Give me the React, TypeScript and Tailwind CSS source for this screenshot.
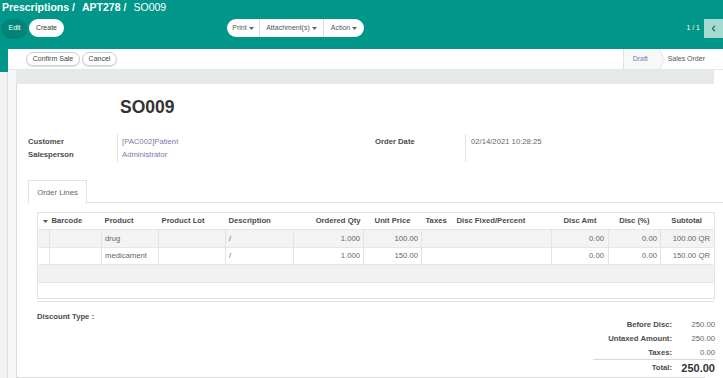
import React from "react";
import { ChevronLeft } from "lucide-react";

const Caret = ({ c = "#4c4c4c" }: { c?: string }) => (
  <svg width="5" height="3" viewBox="0 0 5 3" className="inline-block ml-[2px] align-middle">
    <path d="M0 0h5L2.5 3z" fill={c} />
  </svg>
);

const rows = [
  { product: "drug", qty: "1.000", price: "100.00", amt: "0.00", pct: "0.00", sub: "100.00 QR" },
  { product: "medicament", qty: "1.000", price: "150.00", amt: "0.00", pct: "0.00", sub: "150.00 QR" },
];

export default function App() {
  return (
    <div className="w-[723px] h-[378px] overflow-hidden bg-[#f2f2f2] font-['Liberation_Sans',Arial,sans-serif] text-[#4c4c4c]">
      {/* Control panel */}
      <header className="bg-[#00978a] h-[49px] pl-[2px]">
        <div className="h-[14px] leading-[14px] text-[10.5px] text-white flex items-center whitespace-nowrap">
          <span className="font-bold">Prescriptions</span>
          <span className="font-bold ml-[3px] mr-[7px]">/</span>
          <span className="font-bold">APT278</span>
          <span className="font-bold ml-[3px] mr-[7px]">/</span>
          <span>SO009</span>
        </div>
        <div className="mt-[5px] h-[18px] flex items-center">
          <div className="w-[225px] shrink-0 flex items-center gap-[2px]">
            <button className="h-[18px] w-[25px] rounded-full bg-[#008577] text-white text-[7px] shadow-[0_1px_2px_rgba(0,0,0,0.25)]">
              Edit
            </button>
            <button className="h-[18px] w-[35px] rounded-full bg-white text-[#333] text-[7px]">
              Create
            </button>
          </div>
          <div className="h-[18px] w-[137px] shrink-0 rounded-full bg-white flex items-center text-[7px] text-[#555] whitespace-nowrap">
            <div className="w-[33px] h-full flex items-center justify-center border-r border-[#dcdcdc]">
              Print<Caret c="#666" />
            </div>
            <div className="w-[64px] h-full flex items-center justify-center border-r border-[#dcdcdc]">
              Attachment(s)<Caret c="#666" />
            </div>
            <div className="flex-1 h-full flex items-center justify-center">
              Action<Caret c="#666" />
            </div>
          </div>
          <div className="flex-1" />
          <span className="text-white text-[7px] mr-[4px] whitespace-nowrap">1 / 1</span>
          <div className="w-[19px] h-[19px] shrink-0 bg-[#a5dad3] flex items-center justify-center">
            <ChevronLeft size={9} strokeWidth={3.5} color="#2e6f69" />
          </div>
        </div>
      </header>

      <div className="flex h-[329px]">
        {/* left strip */}
        <div className="w-[8px] shrink-0 flex flex-col">
          <div className="h-[23px] bg-[#00978a]" />
          <div className="flex-1 bg-[#f2f2f2] border-r border-[#e0e0e0]" />
        </div>

        {/* main */}
        <div className="flex-1 flex flex-col bg-[#f7f7f7]">
          {/* statusbar */}
          <div className="h-[21px] bg-white border-b border-[#e6e6e6] flex items-center justify-between">
            <div className="flex items-center gap-[2px] pl-[18px]">
              <button className="h-[14px] w-[54px] rounded-full border border-[#d0d0d0] bg-white text-[7px] text-[#444] whitespace-nowrap shadow-[0_1px_1px_rgba(0,0,0,0.12)]">
                Confirm Sale
              </button>
              <button className="h-[14px] w-[35px] rounded-full border border-[#d0d0d0] bg-white text-[7px] text-[#444] shadow-[0_1px_1px_rgba(0,0,0,0.12)]">
                Cancel
              </button>
            </div>
            <div className="h-full flex items-stretch text-[7px] whitespace-nowrap">
              <div className="relative h-full w-[37px] bg-[#f8f8f8] border-l border-[#e2e2e2] flex items-center pl-[9px] text-[#7c7bad]">
                Draft
                <svg width="6" height="21" viewBox="0 0 6 21" className="absolute right-[-5px] top-0">
                  <path d="M0 0L5.5 10.5L0 21Z" fill="#f8f8f8" />
                  <path d="M0 0L5.5 10.5L0 21" fill="none" stroke="#dedede" strokeWidth="0.8" />
                </svg>
              </div>
              <div className="h-full flex items-center pl-[8px] pr-[18px] text-[#555]">Sales Order</div>
            </div>
          </div>

          <div className="flex-1 flex bg-white">
            <div className="w-[8px] shrink-0 bg-[#f7f7f7]" />
            <div className="flex-1 flex flex-col">
              <div className="h-[14px] w-[698px] bg-[#e6e9e9]" />
              <div className="h-[294px] bg-white border-l border-b border-[#dadada] w-[689px] flex flex-col text-[7.7px] whitespace-nowrap">
                {/* title */}
                <div className="mt-[13px] ml-[103px] text-[17.5px] leading-[20px] font-bold text-[#333]">SO009</div>

                {/* info groups */}
                <div className="mt-[17px] flex">
                  <div className="ml-[11px] w-[347px] shrink-0 flex">
                    <div className="w-[89px] flex flex-col py-[1px] font-bold">
                      <div className="h-[13px] leading-[13px]">Customer</div>
                      <div className="h-[13px] leading-[13px]">Salesperson</div>
                    </div>
                    <div className="w-px bg-[#e4e4e4]" />
                    <div className="pl-[4px] flex flex-col py-[1px] text-[#7c7bad]">
                      <div className="h-[13px] leading-[13px]">[PAC002]Patient</div>
                      <div className="h-[13px] leading-[13px]">Administrator</div>
                    </div>
                  </div>
                  <div className="flex h-[28px] shrink-0">
                    <div className="w-[90px] font-bold py-[1px]">
                      <div className="h-[13px] leading-[13px]">Order Date</div>
                    </div>
                    <div className="w-px bg-[#e4e4e4]" />
                    <div className="pl-[5px] py-[1px] text-[#666]">
                      <div className="h-[13px] leading-[13px]">02/14/2021 10:28:25</div>
                    </div>
                  </div>
                </div>

                {/* tabs */}
                <div className="mt-[18px] ml-[11px] w-[696px] shrink-0 h-[23px] border-b border-[#e2e2e2] flex">
                  <div className="h-[24px] w-[59px] bg-white border border-b-0 border-[#e2e2e2] flex items-center justify-center text-[7.8px] text-[#666]">
                    Order Lines
                  </div>
                </div>

                {/* table */}
                <div className="mt-[9px] ml-[20px] w-[677px] shrink-0 border-b border-[#e4e4e4] pb-[2px]">
                  <table className="table-fixed w-[677px] border-collapse border border-[#e2e2e2]">
                    <colgroup>
                      <col className="w-[12px]" />
                      <col className="w-[52px]" />
                      <col className="w-[57px]" />
                      <col className="w-[67px]" />
                      <col className="w-[68px]" />
                      <col className="w-[70px]" />
                      <col className="w-[58px]" />
                      <col className="w-[30px]" />
                      <col className="w-[100px]" />
                      <col className="w-[57px]" />
                      <col className="w-[52px]" />
                      <col className="w-[54px]" />
                    </colgroup>
                    <thead>
                      <tr className="h-[17px] bg-white font-bold text-[#4c4c4c] text-left">
                        <th className="pl-[3px] font-bold">
                          <Caret c="#555" />
                        </th>
                        <th className="pl-[2px] font-bold">Barcode</th>
                        <th className="pl-[3px] font-bold">Product</th>
                        <th className="pl-[3px] font-bold">Product Lot</th>
                        <th className="pl-[3px] font-bold">Description</th>
                        <th className="pr-[3px] text-right font-bold">Ordered Qty</th>
                        <th className="pr-[11px] text-right font-bold">Unit Price</th>
                        <th className="pl-[4px] font-bold">Taxes</th>
                        <th className="pl-[5px] font-bold">Disc Fixed/Percent</th>
                        <th className="pr-[12px] text-right font-bold">Disc Amt</th>
                        <th className="pr-[11px] text-right font-bold">Disc (%)</th>
                        <th className="pr-[12px] text-right font-bold">Subtotal</th>
                      </tr>
                    </thead>
                    <tbody className="text-[#666]">
                      {rows.map((r, i) => (
                        <tr
                          key={r.product}
                          className={`${i === 0 ? "h-[18px] bg-[#f3f3f3]" : "h-[17px] bg-white"} border-t border-[#e6e6e6]`}
                        >
                          <td className="border-r border-[#e2e2e2]" />
                          <td className="border-r border-[#e2e2e2]" />
                          <td className="pl-[3px] border-r border-[#e2e2e2]">{r.product}</td>
                          <td className="border-r border-[#e2e2e2]" />
                          <td className="pl-[3px] border-r border-[#e2e2e2] text-[#a0522d]">/</td>
                          <td className="pr-[3px] text-right border-r border-[#e2e2e2]">{r.qty}</td>
                          <td className="pr-[3px] text-right border-r border-[#e2e2e2]">{r.price}</td>
                          <td />
                          <td className="border-r border-[#e2e2e2]" />
                          <td className="pr-[4px] text-right border-r border-[#e2e2e2]">{r.amt}</td>
                          <td className="pr-[3px] text-right border-r border-[#e2e2e2]">{r.pct}</td>
                          <td className="pr-[4px] text-right">{r.sub}</td>
                        </tr>
                      ))}
                      <tr className="h-[18px] bg-[#f2f2f2] border-t border-[#e6e6e6]">
                        <td colSpan={12} />
                      </tr>
                    </tbody>
                    <tfoot>
                      <tr className="h-[16px] bg-white border-t border-[#e6e6e6]">
                        <td colSpan={12} />
                      </tr>
                    </tfoot>
                  </table>
                </div>

                {/* bottom */}
                <div className="flex items-start">
                  <div className="ml-[20px] mt-[10px] w-[60px] shrink-0 h-[10px] leading-[10px] font-bold">Discount Type :</div>
                  <div className="ml-[496px] mt-[15px] w-[122px] shrink-0 flex flex-col">
                    <div className="h-[15px] flex items-center">
                      <span className="flex-1 text-right font-bold">Before Disc:</span>
                      <span className="w-[43px] shrink-0 text-right text-[#666]">250.00</span>
                    </div>
                    <div className="h-[14px] flex items-center">
                      <span className="flex-1 text-right font-bold">Untaxed Amount:</span>
                      <span className="w-[43px] shrink-0 text-right text-[#666]">250.00</span>
                    </div>
                    <div className="h-[14px] flex items-center border-b border-[#d8d8d8]">
                      <span className="flex-1 text-right font-bold">Taxes:</span>
                      <span className="w-[43px] shrink-0 text-right text-[#666]">0.00</span>
                    </div>
                    <div className="h-[16px] flex items-center">
                      <span className="flex-1 text-right font-bold">Total:</span>
                      <span className="w-[43px] shrink-0 text-right font-bold text-[11px] text-[#333]">250.00</span>
                    </div>
                  </div>
                </div>
              </div>
            </div>
          </div>
        </div>
      </div>
    </div>
  );
}
